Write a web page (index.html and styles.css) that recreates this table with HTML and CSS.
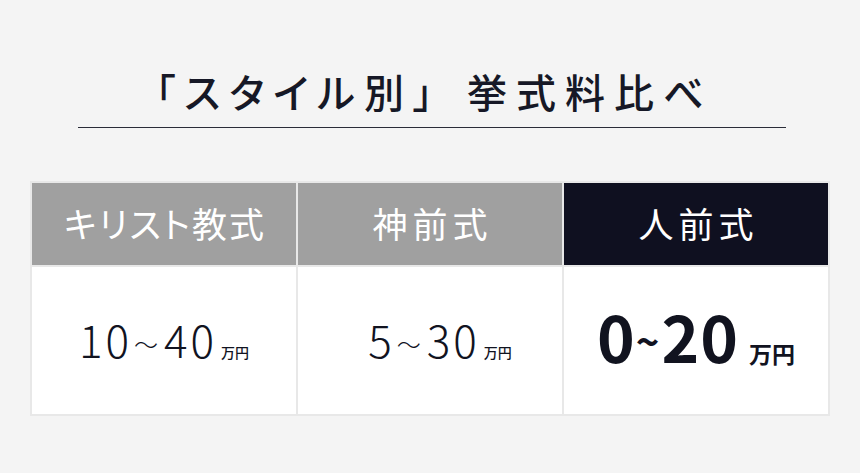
FILE: index.html
```html
<!DOCTYPE html>
<html lang="ja">
<head>
<meta charset="utf-8">
<link rel="stylesheet" href="styles.css">
</head>
<body>
<div class="page">
  <h1 class="title">「スタイル別」 挙式料比べ</h1>
  <div class="rule"></div>
  <div class="table">
    <div class="head gray tight">キリスト教式</div>
    <div class="head gray">神前式</div>
    <div class="head dark">人前式</div>
    <div class="cell"><span class="num">10</span><span class="tilde">～</span><span class="num">40</span><span class="unit">万円</span></div>
    <div class="cell shift"><span class="num">5</span><span class="tilde">～</span><span class="num">30</span><span class="unit">万円</span></div>
    <div class="cell strong"><span class="num">0</span><span class="tilde">~</span><span class="num">20</span><span class="unit">万円</span></div>
  </div>
</div>
</body>
</html>
```
FILE: styles.css
```css
html, body {
  margin: 0;
  padding: 0;
  background: #f4f4f4;
}
body {
  font-family: "Noto Sans CJK JP", "Noto Sans", sans-serif;
  color: #11131f;
}
.page {
  width: 860px;
  height: 473px;
  display: flex;
  flex-direction: column;
  align-items: center;
}
.title {
  margin: 63px 0 0 8px;
  font-size: 40px;
  font-weight: 500;
  letter-spacing: 9px;
  word-spacing: 7px;
  line-height: 56px;
  color: #161826;
  font-feature-settings: "palt";
}
.rule {
  width: 708px;
  height: 1px;
  background: #2a2c38;
  margin: 8px 0 0 3px;
}
.table {
  margin-top: 53px;
  width: 800px;
  box-sizing: border-box;
  padding: 2px;
  background: #e8e8e8;
  display: grid;
  grid-template-columns: repeat(3, 1fr);
  grid-template-rows: 82px 147px;
  gap: 2px;
}
.head {
  display: flex;
  align-items: center;
  justify-content: center;
  color: #ffffff;
  font-size: 35px;
  font-weight: 400;
  letter-spacing: 5px;
  padding: 0 0 4px 5px;
  font-feature-settings: "palt";
}
.head.tight {
  letter-spacing: 2px;
  padding-left: 2px;
}
.gray { background: #a0a0a0; }
.dark { background: #0f1020; }
.cell {
  background: #ffffff;
  display: flex;
  align-items: baseline;
  justify-content: center;
  padding-top: 47px;
  box-sizing: border-box;
}
.num {
  font-size: 44px;
  font-weight: 300;
  letter-spacing: 3px;
  line-height: 50px;
}
.tilde {
  font-size: 24px;
  font-weight: 300;
  position: relative;
  top: -4px;
  margin: 0 6px 0 2px;
}
.unit {
  font-size: 14px;
  font-weight: 500;
  margin-left: 4px;
}
.shift { padding-left: 20px; }
.strong { padding-top: 35px; }
.strong .num {
  font-size: 64px;
  font-weight: 700;
  letter-spacing: 1px;
  line-height: 66px;
}
.strong .tilde {
  font-size: 40px;
  font-weight: 700;
  top: -6px;
  margin: 0 2px 0 0;
}
.strong .unit {
  font-size: 23px;
  font-weight: 700;
  margin-left: 10px;
}
```
